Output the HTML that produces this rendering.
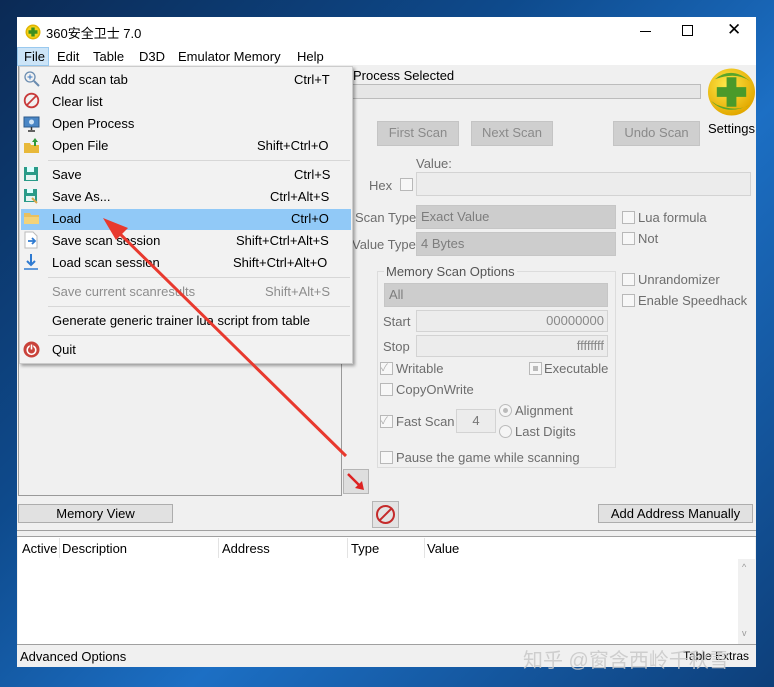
<!DOCTYPE html>
<html><head><meta charset="utf-8"><style>
*{margin:0;padding:0;box-sizing:border-box}
body{width:774px;height:687px;overflow:hidden;position:relative;font-family:"Liberation Sans","Noto Sans CJK SC",sans-serif;font-size:13px;color:#000;
background:linear-gradient(135deg,#0b2a55 0%,#0e4a8c 35%,#1c6fc4 60%,#0d3f7a 100%)}
.a{position:absolute}
.t{position:absolute;white-space:nowrap}
.btn{position:absolute;background:#e1e1e1;border:1px solid #adadad;text-align:center;line-height:21px}
.dis{background:#cfcfcf;border:1px solid #c4c4c4;color:#8a8a8a}
.cb{position:absolute;width:13px;height:13px;border:1px solid #b8b8b8;background:#f7f7f7}
.inp{position:absolute;background:#ececec;border:1px solid #d3d3d3}
.combo{position:absolute;background:#cdcdcd;border:1px solid #c6c6c6;color:#7d7d7d;padding-left:4px;line-height:22px}
.gray{color:#6d6d6d}
.mi{position:absolute;left:52px;white-space:nowrap;font-size:13px}
.sep{position:absolute;left:28px;right:2px;height:1px;background:#d7d7d7}
</style></head><body>
<!-- window -->
<div class="a" style="left:17px;top:17px;width:739px;height:650px;background:#f0f0f0"></div>
<div class="a" style="left:17px;top:17px;width:739px;height:48px;background:#fff"></div>
<!-- title -->
<svg class="a" style="left:25px;top:24px" width="16" height="16" viewBox="0 0 16 16"><circle cx="8" cy="8" r="7.5" fill="#e0b400"/><circle cx="8" cy="8" r="6" fill="#f4d21a"/><path d="M6.3 3.5h3.4v2.8h2.8v3.4H9.7v2.8H6.3V9.7H3.5V6.3h2.8z" fill="#3d8f1f"/></svg>
<div class="t" style="left:46px;top:23px;font-size:13px">360安全卫士 7.0</div>
<div class="a" style="left:640px;top:31px;width:11px;height:1px;background:#000"></div>
<div class="a" style="left:682px;top:25px;width:11px;height:11px;border:1px solid #000"></div>
<div class="t" style="left:727px;top:20px;font-size:17px;font-weight:300">✕</div>
<!-- menu bar -->
<div class="a" style="left:17px;top:47px;width:32px;height:19px;background:#cce4f7;border:1px solid #99c9ef"></div>
<div class="t" style="left:24px;top:49px">File</div>
<div class="t" style="left:57px;top:49px">Edit</div>
<div class="t" style="left:93px;top:49px">Table</div>
<div class="t" style="left:139px;top:49px">D3D</div>
<div class="t" style="left:178px;top:49px">Emulator Memory</div>
<div class="t" style="left:297px;top:49px">Help</div>

<!-- right panel -->
<div class="t" style="left:353px;top:68px">Process Selected</div>
<div class="a" style="left:345px;top:84px;width:356px;height:15px;background:#e6e6e6;border:1px solid #bcbcbc"></div>
<svg class="a" style="left:707px;top:67px" width="49" height="50" viewBox="0 0 50 50"><defs><radialGradient id="g" cx="40%" cy="35%" r="65%"><stop offset="0" stop-color="#ffe94a"/><stop offset="1" stop-color="#e3a900"/></radialGradient></defs><circle cx="25" cy="25" r="24" fill="url(#g)"/><path d="M4 34 Q20 50 44 38 Q30 46 10 38z" fill="#5aa52a"/><path d="M8 12 Q25 -2 44 14 Q30 4 8 12z" fill="#5aa52a"/><path d="M20 10h10v10h10v10H30v10H20V30H10V20h10z" fill="#4a9a2a"/></svg>
<div class="t" style="left:708px;top:121px">Settings</div>
<div class="btn dis" style="left:377px;top:121px;width:82px;height:25px">First Scan</div>
<div class="btn dis" style="left:471px;top:121px;width:82px;height:25px">Next Scan</div>
<div class="btn dis" style="left:613px;top:121px;width:87px;height:25px">Undo Scan</div>
<div class="t gray" style="left:416px;top:156px">Value:</div>
<div class="t gray" style="left:369px;top:178px">Hex</div>
<div class="cb" style="left:400px;top:178px"></div>
<div class="inp" style="left:416px;top:172px;width:335px;height:24px"></div>
<div class="t gray" style="left:355px;top:210px">Scan Type</div>
<div class="combo" style="left:416px;top:205px;width:200px;height:24px">Exact Value</div>
<div class="t gray" style="left:352px;top:237px">Value Type</div>
<div class="combo" style="left:416px;top:232px;width:200px;height:24px">4 Bytes</div>
<div class="cb" style="left:622px;top:211px"></div><div class="t gray" style="left:638px;top:210px">Lua formula</div>
<div class="cb" style="left:622px;top:232px"></div><div class="t gray" style="left:638px;top:231px">Not</div>
<div class="cb" style="left:622px;top:273px"></div><div class="t gray" style="left:638px;top:272px">Unrandomizer</div>
<div class="cb" style="left:622px;top:294px"></div><div class="t gray" style="left:638px;top:293px">Enable Speedhack</div>
<div class="a" style="left:377px;top:271px;width:239px;height:197px;border:1px solid #dcdcdc"></div>
<div class="t" style="left:384px;top:264px;background:#f0f0f0;padding:0 2px;color:#555">Memory Scan Options</div>
<div class="combo" style="left:384px;top:283px;width:224px;height:24px">All</div>
<div class="t gray" style="left:383px;top:314px">Start</div>
<div class="inp" style="left:416px;top:310px;width:192px;height:22px;text-align:right;padding-right:3px;line-height:20px;color:#888">00000000</div>
<div class="t gray" style="left:383px;top:339px">Stop</div>
<div class="inp" style="left:416px;top:335px;width:192px;height:22px;text-align:right;padding-right:3px;line-height:20px;color:#888">ffffffff</div>
<div class="cb" style="left:380px;top:362px;color:#aaa;font-size:10px;line-height:11px">✓</div><div class="t gray" style="left:396px;top:361px">Writable</div>
<div class="cb" style="left:529px;top:362px"><div class="a" style="left:3px;top:3px;width:5px;height:5px;background:#bbb"></div></div><div class="t gray" style="left:544px;top:361px">Executable</div>
<div class="cb" style="left:380px;top:383px"></div><div class="t gray" style="left:396px;top:382px">CopyOnWrite</div>
<div class="cb" style="left:380px;top:415px;color:#aaa;font-size:10px;line-height:11px">✓</div><div class="t gray" style="left:396px;top:414px">Fast Scan</div>
<div class="inp" style="left:456px;top:409px;width:40px;height:24px;text-align:center;line-height:22px;color:#777">4</div>
<div class="a" style="left:499px;top:404px;width:13px;height:13px;border-radius:50%;border:1px solid #bbb;background:#f5f5f5"><div class="a" style="left:3px;top:3px;width:5px;height:5px;border-radius:50%;background:#bbb"></div></div>
<div class="t gray" style="left:515px;top:403px">Alignment</div>
<div class="a" style="left:499px;top:425px;width:13px;height:13px;border-radius:50%;border:1px solid #bbb;background:#f5f5f5"></div>
<div class="t gray" style="left:515px;top:424px">Last Digits</div>
<div class="cb" style="left:380px;top:451px"></div><div class="t gray" style="left:396px;top:450px">Pause the game while scanning</div>

<!-- left list -->
<div class="a" style="left:18px;top:66px;width:324px;height:430px;border:1px solid #9a9a9a;background:#f0f0f0"></div>
<div class="a" style="left:343px;top:469px;width:26px;height:25px;background:#dedede;border:1px solid #b5b5b5"></div>
<svg class="a" style="left:345px;top:471px" width="22" height="22"><path d="M3 3L16 16" stroke="#d22" stroke-width="2.5"/><path d="M19 19L10 17L17 10z" fill="#d22"/></svg>
<div class="btn" style="left:18px;top:504px;width:155px;height:19px;line-height:17px">Memory View</div>
<div class="a" style="left:372px;top:501px;width:27px;height:27px;background:#e3e3e3;border:1px solid #b5b5b5"></div>
<svg class="a" style="left:375px;top:504px" width="21" height="21"><circle cx="10.5" cy="10.5" r="8.5" fill="none" stroke="#c52a2a" stroke-width="2"/><path d="M5 16L16 5" stroke="#c52a2a" stroke-width="2"/></svg>
<div class="btn" style="left:598px;top:504px;width:155px;height:19px;line-height:17px">Add Address Manually</div>
<div class="a" style="left:17px;top:530px;width:739px;height:1px;background:#a0a0a0"></div>
<div class="a" style="left:17px;top:536px;width:739px;height:1px;background:#a0a0a0"></div>
<!-- table -->
<div class="a" style="left:18px;top:537px;width:737px;height:107px;background:#fff"></div>
<div class="t" style="left:22px;top:541px">Active</div>
<div class="a" style="left:59px;top:538px;width:1px;height:20px;background:#e3e3e3"></div>
<div class="t" style="left:62px;top:541px">Description</div>
<div class="a" style="left:218px;top:538px;width:1px;height:20px;background:#e3e3e3"></div>
<div class="t" style="left:222px;top:541px">Address</div>
<div class="a" style="left:347px;top:538px;width:1px;height:20px;background:#e3e3e3"></div>
<div class="t" style="left:351px;top:541px">Type</div>
<div class="a" style="left:424px;top:538px;width:1px;height:20px;background:#e3e3e3"></div>
<div class="t" style="left:427px;top:541px">Value</div>
<div class="a" style="left:738px;top:559px;width:17px;height:85px;background:#f0f0f0"></div>
<div class="t" style="left:742px;top:562px;font-size:9px;color:#999">^</div>
<div class="t" style="left:742px;top:628px;font-size:9px;color:#999">v</div>
<div class="a" style="left:17px;top:644px;width:739px;height:1px;background:#a0a0a0"></div>
<div class="t" style="left:20px;top:649px">Advanced Options</div>
<div class="t" style="left:683px;top:649px;font-size:12px">Table Extras</div>
<div class="t" style="left:523px;top:644px;font-size:20px;color:rgba(200,200,200,.85)">知乎 @窗含西岭千秋雪</div>

<!-- dropdown menu -->
<div class="a" style="left:19px;top:66px;width:334px;height:298px;background:#f2f2f2;border:1px solid #ccc;box-shadow:2px 2px 3px rgba(0,0,0,.35)">
 <div class="a" style="left:1px;top:142px;width:330px;height:21px;background:#91c9f7"></div>
 <div class="sep" style="top:93px"></div>
 <div class="sep" style="top:210px"></div>
 <div class="sep" style="top:239px"></div>
 <div class="sep" style="top:268px"></div>
</div>
<div class="mi" style="top:72px">Add scan tab</div><div class="t" style="left:294px;top:72px">Ctrl+T</div>
<div class="mi" style="top:94px">Clear list</div>
<div class="mi" style="top:116px">Open Process</div>
<div class="mi" style="top:138px">Open File</div><div class="t" style="left:257px;top:138px">Shift+Ctrl+O</div>
<div class="mi" style="top:167px">Save</div><div class="t" style="left:294px;top:167px">Ctrl+S</div>
<div class="mi" style="top:189px">Save As...</div><div class="t" style="left:270px;top:189px">Ctrl+Alt+S</div>
<div class="mi" style="top:211px">Load</div><div class="t" style="left:291px;top:211px">Ctrl+O</div>
<div class="mi" style="top:233px">Save scan session</div><div class="t" style="left:236px;top:233px">Shift+Ctrl+Alt+S</div>
<div class="mi" style="top:255px">Load scan session</div><div class="t" style="left:233px;top:255px">Shift+Ctrl+Alt+O</div>
<div class="mi" style="top:284px;color:#8d8d8d">Save current scanresults</div><div class="t" style="left:265px;top:284px;color:#8d8d8d">Shift+Alt+S</div>
<div class="mi" style="top:313px">Generate generic trainer lua script from table</div>
<div class="mi" style="top:342px">Quit</div>
<!-- menu icons -->
<svg class="a" style="left:23px;top:70px" width="18" height="18"><circle cx="7" cy="7" r="5" fill="none" stroke="#6a8cb0" stroke-width="1.3"/><path d="M11 11l5 5" stroke="#6a8cb0" stroke-width="2"/><path d="M7 4.5v5M4.5 7h5" stroke="#3b78c0"/></svg>
<svg class="a" style="left:23px;top:92px" width="17" height="17"><circle cx="8.5" cy="8.5" r="6.8" fill="none" stroke="#c83a3a" stroke-width="1.8"/><path d="M4 13L13 4" stroke="#c83a3a" stroke-width="1.8"/></svg>
<svg class="a" style="left:23px;top:116px" width="17" height="16"><rect x="1" y="1" width="15" height="10" fill="#4a86c5" stroke="#2c5a8c"/><circle cx="8.5" cy="6" r="2.5" fill="#cfe3f5"/><path d="M8.5 11v3M5 15h7" stroke="#333" stroke-width="1.5"/></svg>
<svg class="a" style="left:23px;top:137px" width="17" height="16"><path d="M1 6h6l1 2h8v8H1z" fill="#e8b93a"/><path d="M12 1l3 4h-2v4h-2V5H9z" fill="#2d9a3a"/></svg>
<svg class="a" style="left:23px;top:166px" width="16" height="16"><rect x="1" y="1" width="14" height="14" fill="#2a9b88"/><rect x="4" y="1" width="7" height="5" fill="#dff"/><rect x="3" y="9" width="10" height="5" fill="#e6f4f2"/></svg>
<svg class="a" style="left:23px;top:188px" width="16" height="16"><rect x="1" y="1" width="13" height="13" fill="#2a9b88"/><rect x="4" y="1" width="6" height="4" fill="#dff"/><rect x="3" y="8" width="9" height="5" fill="#e6f4f2"/><path d="M9 10l5 5" stroke="#d9a64a" stroke-width="2"/></svg>
<svg class="a" style="left:23px;top:210px" width="17" height="15"><path d="M1 3h6l1 2h8v9H1z" fill="#e8c060"/><path d="M1 7h15v7H1z" fill="#f3d37a"/></svg>
<svg class="a" style="left:23px;top:231px" width="16" height="18"><path d="M2 1h8l4 4v12H2z" fill="#fff" stroke="#bbb"/><path d="M5 10h6M9 7l3 3-3 3" stroke="#2e7ad1" stroke-width="1.8" fill="none"/></svg>
<svg class="a" style="left:23px;top:253px" width="16" height="18"><path d="M8 1v11M4 8l4 4 4-4" stroke="#2e7ad1" stroke-width="2" fill="none"/><path d="M1 16h14" stroke="#2e7ad1" stroke-width="1.5"/></svg>
<svg class="a" style="left:23px;top:341px" width="17" height="17"><circle cx="8.5" cy="8.5" r="8" fill="#c9423a"/><circle cx="8.5" cy="9" r="4.3" fill="none" stroke="#fff" stroke-width="1.6"/><path d="M8.5 3.5v5" stroke="#c9423a" stroke-width="3.5"/><path d="M8.5 3.5v5" stroke="#fff" stroke-width="1.6"/></svg>

<!-- red arrow annotation -->
<svg class="a" style="left:0;top:0" width="774" height="687"><path d="M346 456L115 229" stroke="#e8392e" stroke-width="3"/><path d="M103 218L128 228L116 240z" fill="#e8392e"/></svg>
</body></html>
